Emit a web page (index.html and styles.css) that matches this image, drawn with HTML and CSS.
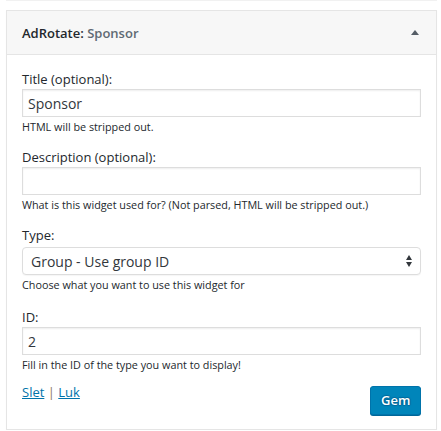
FILE: index.html
```html
<!DOCTYPE html>
<html>
<head>
<meta charset="utf-8">
<link rel="stylesheet" href="styles.css">
</head>
<body>
<div class="prev"></div>
<div class="widget">
  <div class="widget-top">
    <h3 class="widget-title">AdRotate: <span class="in-title">Sponsor</span></h3>
    <span class="toggle"></span>
  </div>
  <div class="widget-inside">
    <div class="field">
      <label class="lbl">Title (optional):</label>
      <input class="widefat" type="text" value="Sponsor">
      <small class="help">HTML will be stripped out.</small>
    </div>
    <div class="field">
      <label class="lbl">Description (optional):</label>
      <input class="widefat" type="text" value="">
      <small class="help">What is this widget used for? (Not parsed, HTML will be stripped out.)</small>
    </div>
    <div class="field field-type">
      <label class="lbl">Type:</label>
      <span class="select-wrap">
        <select class="widefat sel">
          <option>Group - Use group ID</option>
        </select>
      </span>
      <small class="help">Choose what you want to use this widget for</small>
    </div>
    <div class="field field-last">
      <label class="lbl">ID:</label>
      <input class="widefat" type="text" value="2">
      <small class="help">Fill in the ID of the type you want to display!</small>
    </div>
    <div class="actions">
      <div class="links"><a href="#">Slet</a> <span class="sep">|</span> <a href="#">Luk</a></div>
      <button class="btn">Gem</button>
    </div>
  </div>
</div>
</body>
</html>
```

FILE: styles.css
```css
html, body {
  margin: 0;
  padding: 0;
  background: #fff;
}
body {
  font-family: "Open Sans", "Liberation Sans", sans-serif;
  font-size: 13px;
  color: #23282d;
}
.prev {
  height: 1px;
  margin: 0 4px 0 6px;
  background: #f1f1f1;
}
.widget {
  margin: 9px 4px 0 6px;
  border: 1px solid #e5e5e5;
  box-shadow: 0 1px 1px rgba(0,0,0,.04);
  background: #fff;
}
.widget-top {
  height: 43px;
  background: #f7f7f7;
  border-bottom: 1px solid #e5e5e5;
  display: flex;
  align-items: center;
  justify-content: space-between;
  padding: 0 17px 0 15px;
}
.widget-title {
  margin: 0;
  font-size: 13px;
  font-weight: 600;
  color: #23282d;
}
.in-title {
  color: #606a73;
}
.toggle {
  width: 0;
  height: 0;
  border-left: 4px solid transparent;
  border-right: 4px solid transparent;
  border-bottom: 5px solid #555d66;
}
.widget-inside {
  padding: 15px 15px 14px;
}
.field {
  margin: 0 0 14px;
}
.field-type {
  margin-bottom: 16px;
}
.field-last {
  margin-bottom: 11px;
}
.lbl {
  display: block;
  line-height: 19px;
  color: #23282d;
}
.widefat {
  display: block;
  box-sizing: border-box;
  width: 100%;
  height: 28px;
  margin: 0;
  padding: 3px 5px;
  border: 1px solid #ddd;
  box-shadow: inset 0 1px 2px rgba(0,0,0,.07);
  font-family: "Open Sans", "Liberation Sans", sans-serif;
  font-size: 14px;
  color: #32373c;
  background: #fff;
  outline: none;
}
.select-wrap {
  display: block;
  position: relative;
  margin-top: 2px;
}
.sel {
  -webkit-appearance: none;
  appearance: none;
  border-radius: 4px;
  padding: 2px 8px;
  box-shadow: 0 1px 1px rgba(0,0,0,.04);
}
.select-wrap::before,
.select-wrap::after {
  content: "";
  position: absolute;
  right: 9px;
  width: 0;
  height: 0;
  border-left: 3.5px solid transparent;
  border-right: 3.5px solid transparent;
}
.select-wrap::before {
  top: 8px;
  border-bottom: 5px solid #32373c;
}
.select-wrap::after {
  top: 15px;
  border-top: 5px solid #32373c;
}
.help {
  display: block;
  font-size: 10.8px;
  line-height: 15px;
  margin-top: 2px;
  color: #23282d;
}
.actions {
  display: flex;
  justify-content: space-between;
  align-items: flex-start;
}
.links {
  line-height: 18px;
}
.links a {
  color: #0073aa;
  text-decoration: underline;
}
.sep {
  color: #8c7a5a;
}
.btn {
  height: 29px;
  width: 51px;
  margin-top: 3px;
  padding: 0 10px 2px;
  background: #0085ba;
  border: 1px solid #0073aa;
  border-radius: 3px;
  box-shadow: 0 1px 0 #006799;
  color: #fff;
  font-family: "Open Sans", "Liberation Sans", sans-serif;
  font-size: 13px;
  font-weight: 600;
  text-shadow: 0 -1px 1px #006799, 1px 0 1px #006799, 0 1px 1px #006799, -1px 0 1px #006799;
}
```
